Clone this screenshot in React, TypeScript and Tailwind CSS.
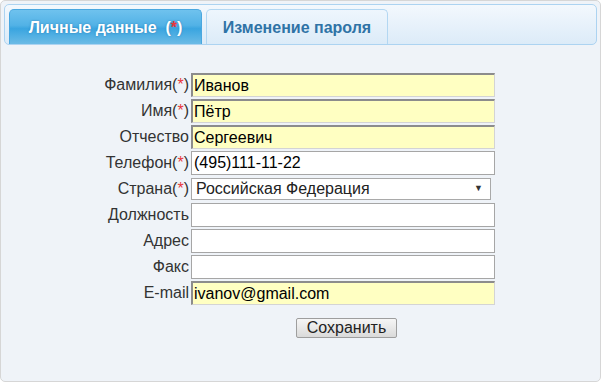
import React from 'react'

const font = { fontFamily: '"Liberation Sans", Arial, sans-serif' }

type Field = {
  label: string
  value: string
  required?: boolean
  filled?: boolean
  select?: boolean
}

const FIELDS: Field[] = [
  { label: 'Фамилия', value: 'Иванов', required: true, filled: true },
  { label: 'Имя', value: 'Пётр', required: true, filled: true },
  { label: 'Отчество', value: 'Сергеевич', filled: true },
  { label: 'Телефон', value: '(495)111-11-22', required: true },
  { label: 'Страна', value: 'Российская Федерация', required: true, select: true },
  { label: 'Должность', value: '' },
  { label: 'Адрес', value: '' },
  { label: 'Факс', value: '' },
  { label: 'E-mail', value: 'ivanov@gmail.com', filled: true },
]

function Star() {
  return (
    <>
      (<span className="text-[#e8383d]">*</span>)
    </>
  )
}

function FieldRow({ f }: { f: Field }) {
  return (
    <div className="flex h-[26px] items-center">
      <div className="w-[187px] pr-[2px] text-right text-[16px] leading-none text-[#333]">
        {f.label}
        {f.required ? <Star /> : null}
      </div>
      {f.select ? (
        <div className="flex h-[22px] w-[300px] items-center justify-between border border-[#a9a9a9] bg-white pl-[4px] pr-[7px] text-[16px] text-[#222]">
          <span>{f.value}</span>
          <span className="text-[9px] text-[#333]">▼</span>
        </div>
      ) : f.filled ? (
        <div className="flex h-[24px] w-[304px] items-center border-l-2 border-t-2 border-b border-r border-l-[#8c8c8c] border-t-[#8c8c8c] border-b-[#d4d4d4] border-r-[#d4d4d4] bg-[#ffffc2] pl-[1px] text-[16px] text-black">
          {f.value}
        </div>
      ) : (
        <div className="flex h-[24px] w-[304px] items-center border border-[#a6a6a6] bg-white pl-[2px] text-[16px] text-black">
          {f.value}
        </div>
      )}
    </div>
  )
}

export default function App() {
  return (
    <div style={font} className="h-[382px] w-[601px] bg-white">
      <div className="flex h-full flex-col rounded-[5px] border border-[#d6d6d6] bg-[#eff3f8] p-[3px]">
        {/* tab strip */}
        <div className="flex h-[41px] items-end gap-[4px] rounded-[5px] border border-[#acd3f1] bg-gradient-to-b from-[#f3f8fd] to-[#dcebf8] px-[4px]">
          <div className="flex h-[35px] w-[193px] items-center justify-center rounded-t-[5px] border border-b-0 border-[#4aa7df] bg-[linear-gradient(#6fc2ee,#52b2e6_45%,#3aa5e0_55%,#6bbbe6)] pt-[2px] text-[16px] font-bold text-white [text-shadow:0_0_2px_rgba(0,80,140,0.5)]">
            Личные данные&nbsp;&nbsp;(<span className="text-[#e8383d]">*</span>)
          </div>
          <div className="flex h-[35px] w-[182px] items-center justify-center rounded-t-[5px] border border-b-0 border-[#b3d7f2] bg-gradient-to-b from-[#eef6fd] to-[#dcebf8] pt-[2px] text-[16px] font-bold text-[#2f73a6]">
            Изменение пароля
          </div>
        </div>

        {/* form */}
        <div className="flex flex-col pt-[27px]">
          {FIELDS.map((f) => (
            <FieldRow key={f.label} f={f} />
          ))}
          <div className="mt-[12px] flex pl-[292px]">
            <button
              type="button"
              className="h-[20px] w-[101px] rounded-[2px] border border-[#9e9e9e] bg-gradient-to-b from-[#f6f6f6] to-[#dadada] text-[16px] leading-none text-[#222]"
            >
              Сохранить
            </button>
          </div>
        </div>
      </div>
    </div>
  )
}
